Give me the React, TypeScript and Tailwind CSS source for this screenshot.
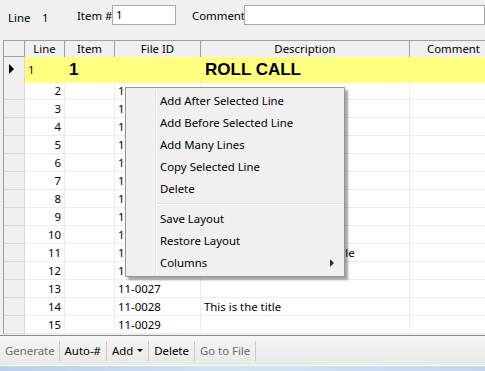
const cols = "grid-cols-[21px_40px_50px_86px_209px_88px]";

const rows = [
  { n: 2, id: "11-0016", desc: "" },
  { n: 3, id: "11-0017", desc: "" },
  { n: 4, id: "11-0018", desc: "" },
  { n: 5, id: "11-0019", desc: "" },
  { n: 6, id: "11-0020", desc: "" },
  { n: 7, id: "11-0021", desc: "" },
  { n: 8, id: "11-0022", desc: "" },
  { n: 9, id: "11-0023", desc: "" },
  { n: 10, id: "11-0024", desc: "" },
  { n: 11, id: "11-0025", desc: "This is also a much long title" },
  { n: 12, id: "11-0026", desc: "" },
  { n: 13, id: "11-0027", desc: "" },
  { n: 14, id: "11-0028", desc: "This is the title" },
  { n: 15, id: "11-0029", desc: "" },
];

const menuTop = ["Add After Selected Line", "Add Before Selected Line", "Add Many Lines", "Copy Selected Line", "Delete"];
const menuBottom = ["Save Layout", "Restore Layout"];

function MenuItem({ label, arrow }: { label: string; arrow?: boolean }) {
  return (
    <div className="flex h-[22px] items-center justify-between pl-[34px] pr-[10px]">
      <span>{label}</span>
      {arrow && <span className="h-0 w-0 border-y-[4px] border-l-[4px] border-y-transparent border-l-[#333]" />}
    </div>
  );
}

function ToolSep() {
  return <div className="mx-[1px] h-[20px] w-px bg-[#cfcac0]" />;
}

export default function App() {
  return (
    <div className="relative flex h-[371px] w-[485px] flex-col overflow-hidden bg-[#f0f0f0] font-['Noto_Sans',sans-serif] text-[11.4px] text-black">
      {/* top fields */}
      <div className="flex h-[40px] items-start whitespace-nowrap pt-[5px]">
        <span className="ml-[8px] mt-[4px] w-[34px] shrink-0">Line</span>
        <span className="mt-[4px] w-[35px] shrink-0">1</span>
        <span className="mt-[2px] w-[35px] shrink-0">Item #</span>
        <div className="h-[20px] w-[64px] shrink-0 border border-[#a9a9a9] bg-white pl-[3px] leading-[18px]">1</div>
        <span className="ml-[16px] mt-[2px] w-[52px] shrink-0">Comment</span>
        <div className="h-[20px] flex-1 border border-[#a9a9a9] bg-white" />
      </div>

      {/* grid */}
      <div className="ml-[3px] h-[294px] overflow-hidden border-l border-t border-[#a0a0a0] bg-white">
        <div className={`grid ${cols} h-[16px] w-max bg-[#f0f0f0] leading-[15px]`}>
          <div className="border-b border-r border-[#a0a0a0]" />
          <div className="border-r border-[#a0a0a0] text-center">Line</div>
          <div className="border-r border-[#a0a0a0] text-center">Item</div>
          <div className="border-r border-[#a0a0a0] text-center">File ID</div>
          <div className="border-r border-[#a0a0a0] text-center">Description</div>
          <div className="border-r border-[#a0a0a0] text-center">Comment</div>
        </div>
        <div className={`grid ${cols} h-[25px] w-max`}>
          <div className="flex items-center border-b border-r border-[#d9d9d9] bg-[#f0f0f0] pl-[5px]">
            <span className="h-0 w-0 border-y-[5px] border-l-[5px] border-y-transparent border-l-black" />
          </div>
          <div className="flex items-center bg-[#ffff80] pl-[3px] text-[#3c0a00]">1</div>
          <div className="flex items-center bg-[#ffff80] pl-[4px] font-['Liberation_Sans',sans-serif] text-[17px] font-bold">1</div>
          <div className="bg-[#ffff80]" />
          <div className="flex items-center bg-[#ffff80] pl-[4px] font-['Liberation_Sans',sans-serif] text-[17px] font-bold">ROLL CALL</div>
          <div className="bg-[#ffff80]" />
        </div>
        {rows.map((r) => (
          <div key={r.n} className={`grid ${cols} h-[18px] w-max leading-[17px]`}>
            <div className="border-b border-r border-[#d9d9d9] bg-[#f0f0f0]" />
            <div className="border-b border-r border-[#ececec] pr-[3px] text-right">{r.n}</div>
            <div className="border-b border-r border-[#ececec]" />
            <div className="border-b border-r border-[#ececec] pl-[3px]">{r.id}</div>
            <div className="overflow-hidden whitespace-nowrap border-b border-r border-[#ececec] pl-[3px]">{r.desc}</div>
            <div className="border-b border-r border-[#ececec]" />
          </div>
        ))}
      </div>

      {/* toolbar */}
      <div className="mt-px flex h-[30px] items-center border-t border-[#8c8c8c] bg-gradient-to-b from-[#f5f5f5] to-[#e9e9e9] pl-[2px]">
        <span className="px-[3px] text-[#6d6d6d]">Generate</span>
        <ToolSep />
        <span className="px-[4px]">Auto-#</span>
        <ToolSep />
        <span className="flex items-center gap-[4px] px-[4px]">
          Add
          <span className="h-0 w-0 border-x-[3px] border-t-[3px] border-x-transparent border-t-black" />
        </span>
        <ToolSep />
        <span className="px-[4px]">Delete</span>
        <ToolSep />
        <span className="px-[4px] text-[#6d6d6d]">Go to File</span>
        <ToolSep />
      </div>
      <div className="h-px bg-white" />
      <div className="flex-1 bg-gradient-to-r from-[#b9d1ea] via-[#d4e3f3] to-[#c3d7ee]" />

      {/* context menu */}
      <div className="absolute left-[125px] top-[87px] w-[220px] border border-[#979797] bg-[#f0f0f0] py-[2px] shadow-[3px_3px_2px_rgba(0,0,0,0.35)]">
        <div className="absolute bottom-[2px] left-[29px] top-[2px] w-px bg-[#e2e3e3]" />
        <div className="absolute bottom-[2px] left-[30px] top-[2px] w-px bg-white" />
        {menuTop.map((m) => (
          <MenuItem key={m} label={m} />
        ))}
        <div className="my-[3px] ml-[30px] mr-[1px] h-[2px] border-b border-t border-b-white border-t-[#e0e0e0]" />
        {menuBottom.map((m) => (
          <MenuItem key={m} label={m} />
        ))}
        <MenuItem label="Columns" arrow />
      </div>
    </div>
  );
}
